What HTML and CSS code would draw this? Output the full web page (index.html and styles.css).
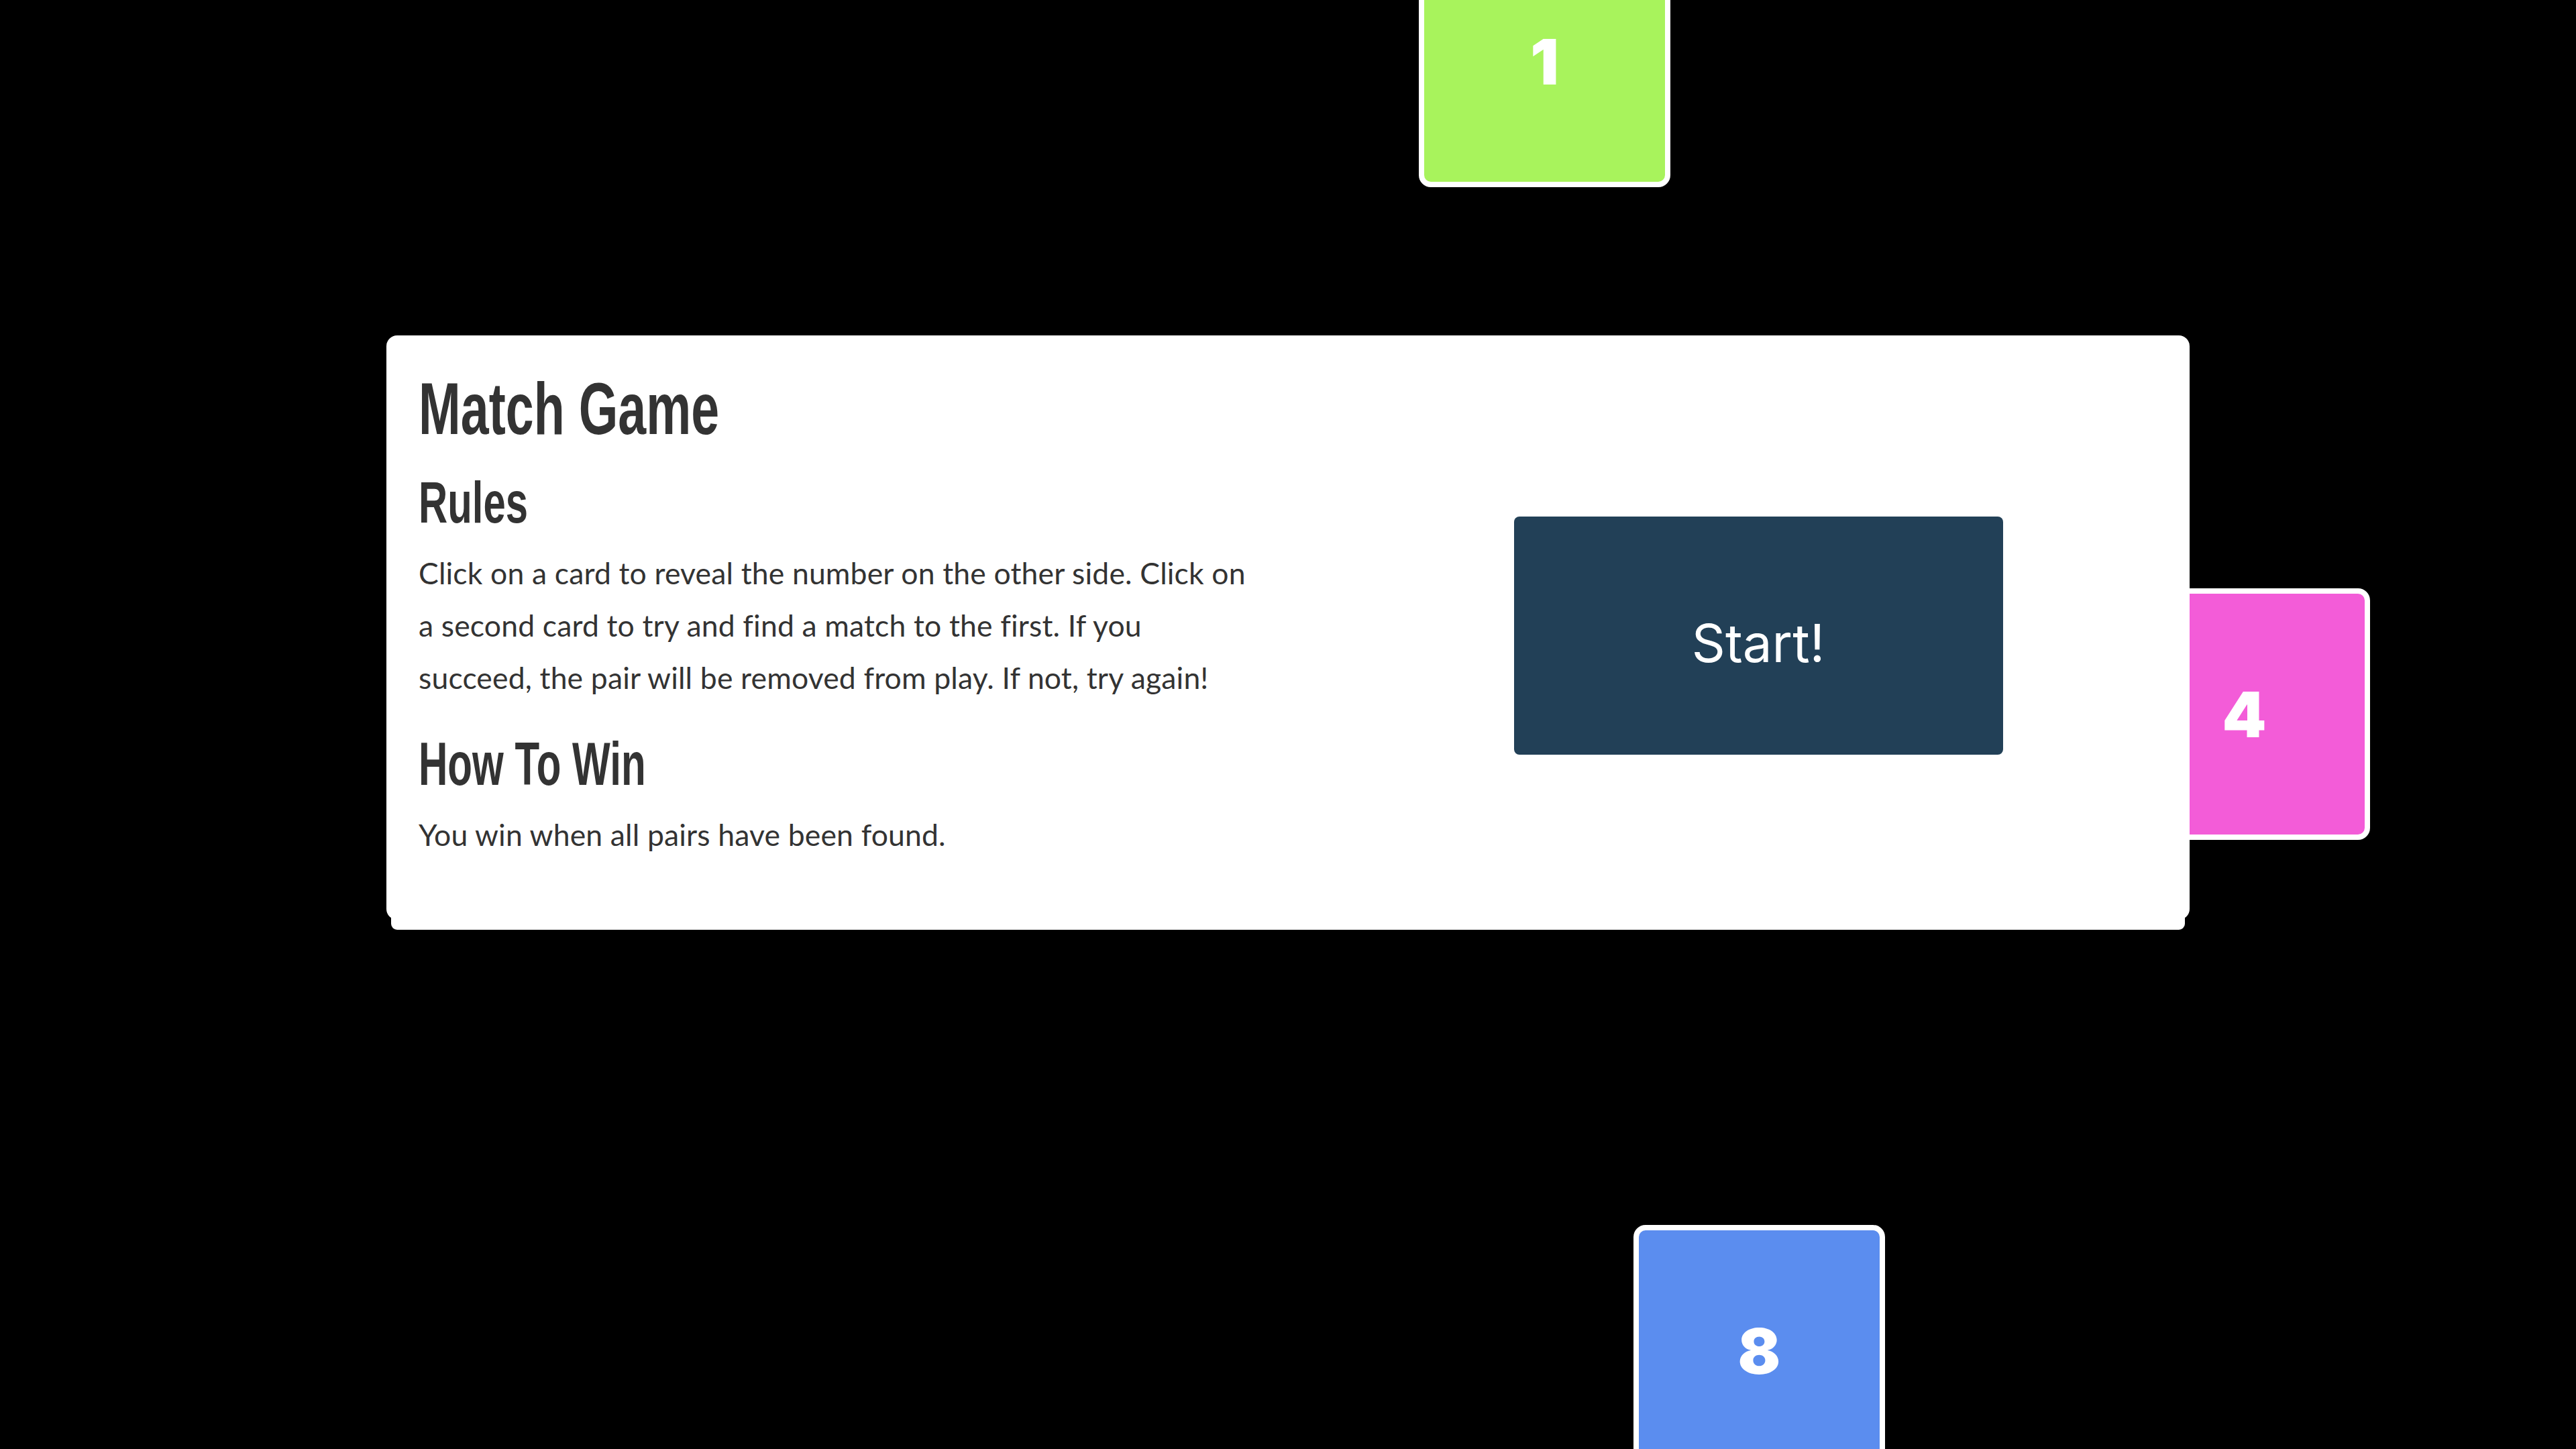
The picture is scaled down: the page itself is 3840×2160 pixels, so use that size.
FILE: index.html
```html
<!DOCTYPE html>
<html lang="en">
<head>
<meta charset="utf-8">
<title>Match Game</title>
<link rel="stylesheet" href="styles.css">
</head>
<body>
<div class="board">
  <div class="card card-green" style="left:2115px;top:-96px">1</div>
  <div class="card card-pink" style="left:3158px;top:877px">4</div>
  <div class="card card-blue" style="left:2435px;top:1826px">8</div>
</div>
<main class="stage">
  <section class="panel">
    <div class="info">
      <h1 class="title">Match Game</h1>
      <h2 class="subtitle">Rules</h2>
      <p class="text">Click on a card to reveal the number on the other side. Click on<br>a second card to try and find a match to the first. If you<br>succeed, the pair will be removed from play. If not, try again!</p>
      <h2 class="subtitle subtitle-win">How To Win</h2>
      <p class="text">You win when all pairs have been found.</p>
    </div>
    <div class="actions">
      <button class="start-btn">Start!</button>
    </div>
  </section>
</main>
</body>
</html>
```
FILE: styles.css
```css
html, body {
  margin: 0;
  padding: 0;
  background: #000;
}
body {
  width: 3840px;
  height: 2160px;
  overflow: hidden;
  position: relative;
}
.board {
  position: absolute;
  inset: 0;
}
.card {
  position: absolute;
  width: 375px;
  height: 375px;
  box-sizing: border-box;
  border: 8px solid #fff;
  border-radius: 18px;
  display: flex;
  align-items: center;
  justify-content: center;
  color: #fff;
  font-family: "Inter", "Liberation Sans", sans-serif;
  font-weight: 900;
  font-size: 94px;
  line-height: 1;
}
.card-green { background: #a8f35c; }
.card-pink { background: #f35cd8; }
.card-blue { background: #5b8def; }

.stage {
  position: relative;
  padding-top: 500px;
}
.panel {
  position: relative;
  width: 2688px;
  margin: 0 auto;
  box-sizing: border-box;
  background: #fff;
  border-radius: 16px;
  padding: 48px 48px 88px 48px;
  display: flex;
  align-items: center;
  box-shadow: 0 22px 0 -7px #fff;
}
.info {
  width: 1402px;
  flex: none;
  color: #333;
}
.title, .subtitle {
  margin: 0;
  font-family: "Liberation Sans", Arial, sans-serif;
  font-weight: 700;
  color: #333;
  line-height: 1.1;
  transform-origin: left center;
  white-space: nowrap;
}
.title {
  font-size: 110px;
  transform: scaleX(0.685);
}
.subtitle {
  font-size: 88px;
  margin-top: 32px;
  transform: scaleX(0.68);
}
.subtitle-win {
  font-size: 91px;
  margin-top: 40px;
  transform: scaleX(0.66);
}
.text {
  margin: 17px 0 0 0;
  font-family: "Lato", "Liberation Sans", sans-serif;
  font-weight: 400;
  font-size: 44.5px;
  letter-spacing: 0.15px;
  line-height: 78px;
  color: #333;
}
.subtitle-win + .text {
  margin-top: 16px;
}
.actions {
  flex: 1;
  display: flex;
  justify-content: center;
  align-items: center;
  padding-top: 64px;
}
.start-btn {
  width: 729px;
  height: 355px;
  padding: 22px 0 0 0;
  border: none;
  border-radius: 8px;
  background: #224057;
  color: #fff;
  font-family: "Inter", "Open Sans", sans-serif;
  font-weight: 400;
  font-size: 78px;
  cursor: pointer;
}
```
